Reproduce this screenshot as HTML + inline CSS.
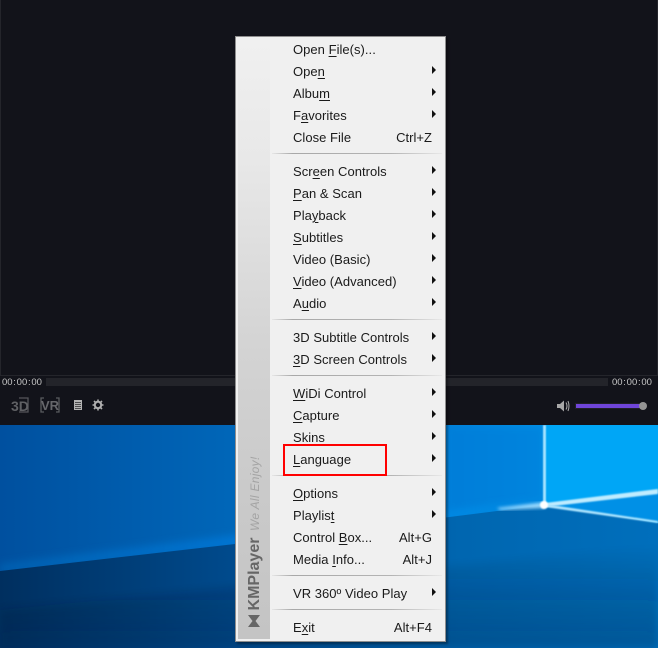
<!DOCTYPE html>
<html><head><meta charset="utf-8">
<style>
html,body{margin:0;padding:0;background:#fff}
#p{position:relative;width:658px;height:648px;overflow:hidden;font-family:"Liberation Sans",sans-serif}
.a{position:absolute}
.r{position:absolute;left:293px;margin-top:1px;height:22px;line-height:22px;font-size:13px;color:#1a1a1a;white-space:nowrap;letter-spacing:.03px}
.r u{text-decoration-thickness:1px;text-underline-offset:2px}
.k{position:absolute;margin-top:1px;height:22px;line-height:22px;font-size:13px;color:#1a1a1a;right:226px;white-space:nowrap;letter-spacing:.03px}
.s{position:absolute;left:272px;width:170px;height:1px;background:linear-gradient(90deg,#e6e6e6,#a8a8a8 12%,#b4b4b4 70%,#e8e8e8)}
.t{position:absolute;width:0;height:0;left:432px;border-left:4px solid #111;border-top:4px solid transparent;border-bottom:4px solid transparent}
.tm{position:absolute;top:377px;font-size:9.5px;line-height:12px;color:#c8c8c8;letter-spacing:0;word-spacing:-1.9px;white-space:pre}
</style></head><body>
<div id="p">
<svg class="a" style="left:0;top:425px" width="658" height="223" viewBox="0 425 658 223">
<defs>
<linearGradient id="up" x1="0" y1="0" x2="1" y2="0"><stop offset="0" stop-color="#00509f"/><stop offset=".35" stop-color="#0066b8"/><stop offset=".7" stop-color="#0086de"/><stop offset="1" stop-color="#00a8f8"/></linearGradient>
<linearGradient id="lo" x1="0" y1="0" x2="1" y2="0"><stop offset="0" stop-color="#002f5f"/><stop offset=".35" stop-color="#004a8c"/><stop offset=".7" stop-color="#0066b0"/><stop offset="1" stop-color="#006fbc"/></linearGradient>
<linearGradient id="sh" x1="0" y1="0" x2="0" y2="1"><stop offset="0" stop-color="#000" stop-opacity="0"/><stop offset="1" stop-color="#00264f" stop-opacity=".5"/></linearGradient>
<linearGradient id="band" x1="0" y1="0" x2="1" y2="0"><stop offset="0" stop-color="#0060b0"/><stop offset=".5" stop-color="#0078d8"/><stop offset="1" stop-color="#0092ea"/></linearGradient>
<filter id="b1"><feGaussianBlur stdDeviation="4"/></filter>
<filter id="b2"><feGaussianBlur stdDeviation=".7"/></filter>
<filter id="b3"><feGaussianBlur stdDeviation="1.500"/></filter>
</defs>
<rect x="0" y="425" width="658" height="223" fill="url(#up)"/>
<polygon points="446,425 545,425 545,505 446,520" fill="#0079d6" opacity=".55" filter="url(#b1)"/>
<polygon points="545,425 658,425 658,495 545,505" fill="#00a6f6"/>
<polygon points="0,564 235,535 545,500 450,520 235,548 0,574" fill="url(#band)" filter="url(#b1)"/>
<polygon points="545,505 658,523 658,648 0,648 0,571 235,544" fill="url(#lo)"/>
<polygon points="0,610 658,545 658,648 0,648" fill="url(#sh)" opacity=".6" filter="url(#b1)"/>
<polygon points="545,505 658,493 658,522" fill="#0090e6"/>
<polygon points="497,508 545,502 545,508 500,510" fill="#a0dcff" opacity=".95" filter="url(#b3)"/>
<rect x="543" y="425" width="3" height="80" fill="#a8e4ff" filter="url(#b2)"/>
<polygon points="545,503 658,489 658,494 545,507" fill="#c0ecff" filter="url(#b2)"/>
<polygon points="545,504 658,521 658,523 545,507" fill="#b0e6ff" filter="url(#b2)"/>
<circle cx="544" cy="505" r="4" fill="#fff" filter="url(#b2)"/>
</svg>

<div class="a" style="left:0;top:0;width:658px;height:425px;background:#12131a"></div>
<div class="a" style="left:0;top:0;width:1px;height:376px;background:#24252b"></div>
<div class="a" style="right:0;top:0;width:1px;height:376px;background:#24252b"></div>
<div class="a" style="left:0;top:375px;width:658px;height:1px;background:#24252b"></div>
<div class="a" style="left:46px;top:378px;width:190px;height:8px;background:#23242a"></div>
<div class="a" style="left:446px;top:378px;width:162px;height:8px;background:#23242a"></div>
<div class="tm" style="left:2px">00 : 00 : 00</div>
<div class="tm" style="left:612px">00 : 00 : 00</div>

<svg class="a" style="left:0;top:390px" width="120" height="30" viewBox="0 390 120 30">
<path d="M19 398h9v14h-9" fill="none" stroke="#55565a" stroke-width="1.3"/>
<text x="11" y="411" font-family="Liberation Sans" font-size="14" font-weight="bold" fill="#5f6064">3D</text>
<path d="M44 398h-3v14h3M56 398h3v14h-3" fill="none" stroke="#5a5b5f" stroke-width="1.3"/>
<text x="41" y="410" font-family="Liberation Sans" font-size="13" font-weight="bold" fill="#66676b" textLength="18" lengthAdjust="spacingAndGlyphs">VR</text>
<rect x="74" y="400" width="8" height="10" fill="#b4b4b4"/>
<path d="M75 402.5h6M75 404.5h6M75 406.5h6M75 408.5h6" stroke="#2a2a2c" stroke-width=".8"/>
<circle cx="98" cy="405" r="3.2" fill="none" stroke="#b0b0b0" stroke-width="2"/>
<path d="M98 399.5v2M98 408.5v2M92.5 405h2M101.5 405h2M94 401l1.5 1.5M100.5 407.5l1.5 1.5M94 409l1.5-1.5M100.5 402.5l1.500-1.500" stroke="#b0b0b0" stroke-width="1.600"/>
</svg>

<svg class="a" style="left:550px;top:394px" width="108" height="24" viewBox="550 394 108 24">
<path d="M557 404h3l4-3.500v11l-4-3.500h-3z" fill="#a8a8a8"/>
<path d="M566 402.500q2 3.500 0 7M568 401q2 5 0 10" fill="none" stroke="#b0b0b0" stroke-width="1"/>
<rect x="576" y="404" width="66" height="4" fill="#6f45d8"/>
<rect x="575.500" y="403.500" width="67" height="5" fill="none" stroke="#2a2a30" stroke-width=".6"/>
<circle cx="643" cy="406" r="4" fill="#949494"/>
</svg>

<div class="a" style="left:235px;top:36px;width:209px;height:604px;background:#f0f0f0;border:1px solid #8e8e8e;box-shadow:2px 2px 2px rgba(0,0,0,.35)"></div>
<div class="a" style="left:238px;top:40px;width:32px;height:599px;background:linear-gradient(180deg,#f0f0f0 0,#e8e8e8 20%,#d4d4d4 50%,#cacaca 75%,#c4c4c4 100%)"></div>

<div class="a" style="left:255px;top:494px;width:0;height:0">
<div class="a" style="left:-37px;top:-9px;width:74px;height:18px;line-height:18px;font-size:12px;font-style:italic;color:#a4a4a4;white-space:nowrap;transform:rotate(-90deg);text-align:center;letter-spacing:.300px">We All Enjoy!</div>
</div>
<div class="a" style="left:255px;top:574px;width:0;height:0">
<div class="a" style="left:-40px;top:-10px;width:80px;height:20px;line-height:20px;font-size:16px;font-weight:bold;color:#666;white-space:nowrap;transform:rotate(-90deg);text-align:center">KMPlayer</div>
</div>
<svg class="a" style="left:247px;top:614px" width="14" height="14" viewBox="0 0 14 14"><path d="M1 1h12L8.500 7 13 13H1L5.500 7z" fill="#666"/></svg>

<div class="r" style="top:38px">Open <u>F</u>ile(s)...</div>
<div class="r" style="top:60px">Ope<u>n</u></div><div class="t" style="top:66px"></div>
<div class="r" style="top:82px">Albu<u>m</u></div><div class="t" style="top:88px"></div>
<div class="r" style="top:104px">F<u>a</u>vorites</div><div class="t" style="top:110px"></div>
<div class="r" style="top:126px">Close File</div><div class="k" style="top:126px">Ctrl+Z</div>
<div class="s" style="top:153px"></div>
<div class="r" style="top:160px">Scr<u>e</u>en Controls</div><div class="t" style="top:166px"></div>
<div class="r" style="top:182px"><u>P</u>an &amp; Scan</div><div class="t" style="top:188px"></div>
<div class="r" style="top:204px">Pla<u>y</u>back</div><div class="t" style="top:210px"></div>
<div class="r" style="top:226px"><u>S</u>ubtitles</div><div class="t" style="top:232px"></div>
<div class="r" style="top:248px">Video (Basic)</div><div class="t" style="top:254px"></div>
<div class="r" style="top:270px"><u>V</u>ideo (Advanced)</div><div class="t" style="top:276px"></div>
<div class="r" style="top:292px">A<u>u</u>dio</div><div class="t" style="top:298px"></div>
<div class="s" style="top:319px"></div>
<div class="r" style="top:326px">3D Subtitle Controls</div><div class="t" style="top:332px"></div>
<div class="r" style="top:348px"><u>3</u>D Screen Controls</div><div class="t" style="top:354px"></div>
<div class="s" style="top:375px"></div>
<div class="r" style="top:382px"><u>W</u>iDi Control</div><div class="t" style="top:388px"></div>
<div class="r" style="top:404px"><u>C</u>apture</div><div class="t" style="top:410px"></div>
<div class="r" style="top:426px">Skins</div><div class="t" style="top:432px"></div>
<div class="r" style="top:448px"><u>L</u>anguage</div><div class="t" style="top:454px"></div>
<div class="s" style="top:475px"></div>
<div class="r" style="top:482px"><u>O</u>ptions</div><div class="t" style="top:488px"></div>
<div class="r" style="top:504px">Playlis<u>t</u></div><div class="t" style="top:510px"></div>
<div class="r" style="top:526px">Control <u>B</u>ox...</div><div class="k" style="top:526px">Alt+G</div>
<div class="r" style="top:548px">Media <u>I</u>nfo...</div><div class="k" style="top:548px">Alt+J</div>
<div class="s" style="top:575px"></div>
<div class="r" style="top:582px">VR 360º Video Play</div><div class="t" style="top:588px"></div>
<div class="s" style="top:609px"></div>
<div class="r" style="top:616px">E<u>x</u>it</div><div class="k" style="top:616px">Alt+F4</div>

<div class="a" style="left:283px;top:444px;width:100px;height:28px;border:2px solid #f00"></div>
</div>
</body></html>
